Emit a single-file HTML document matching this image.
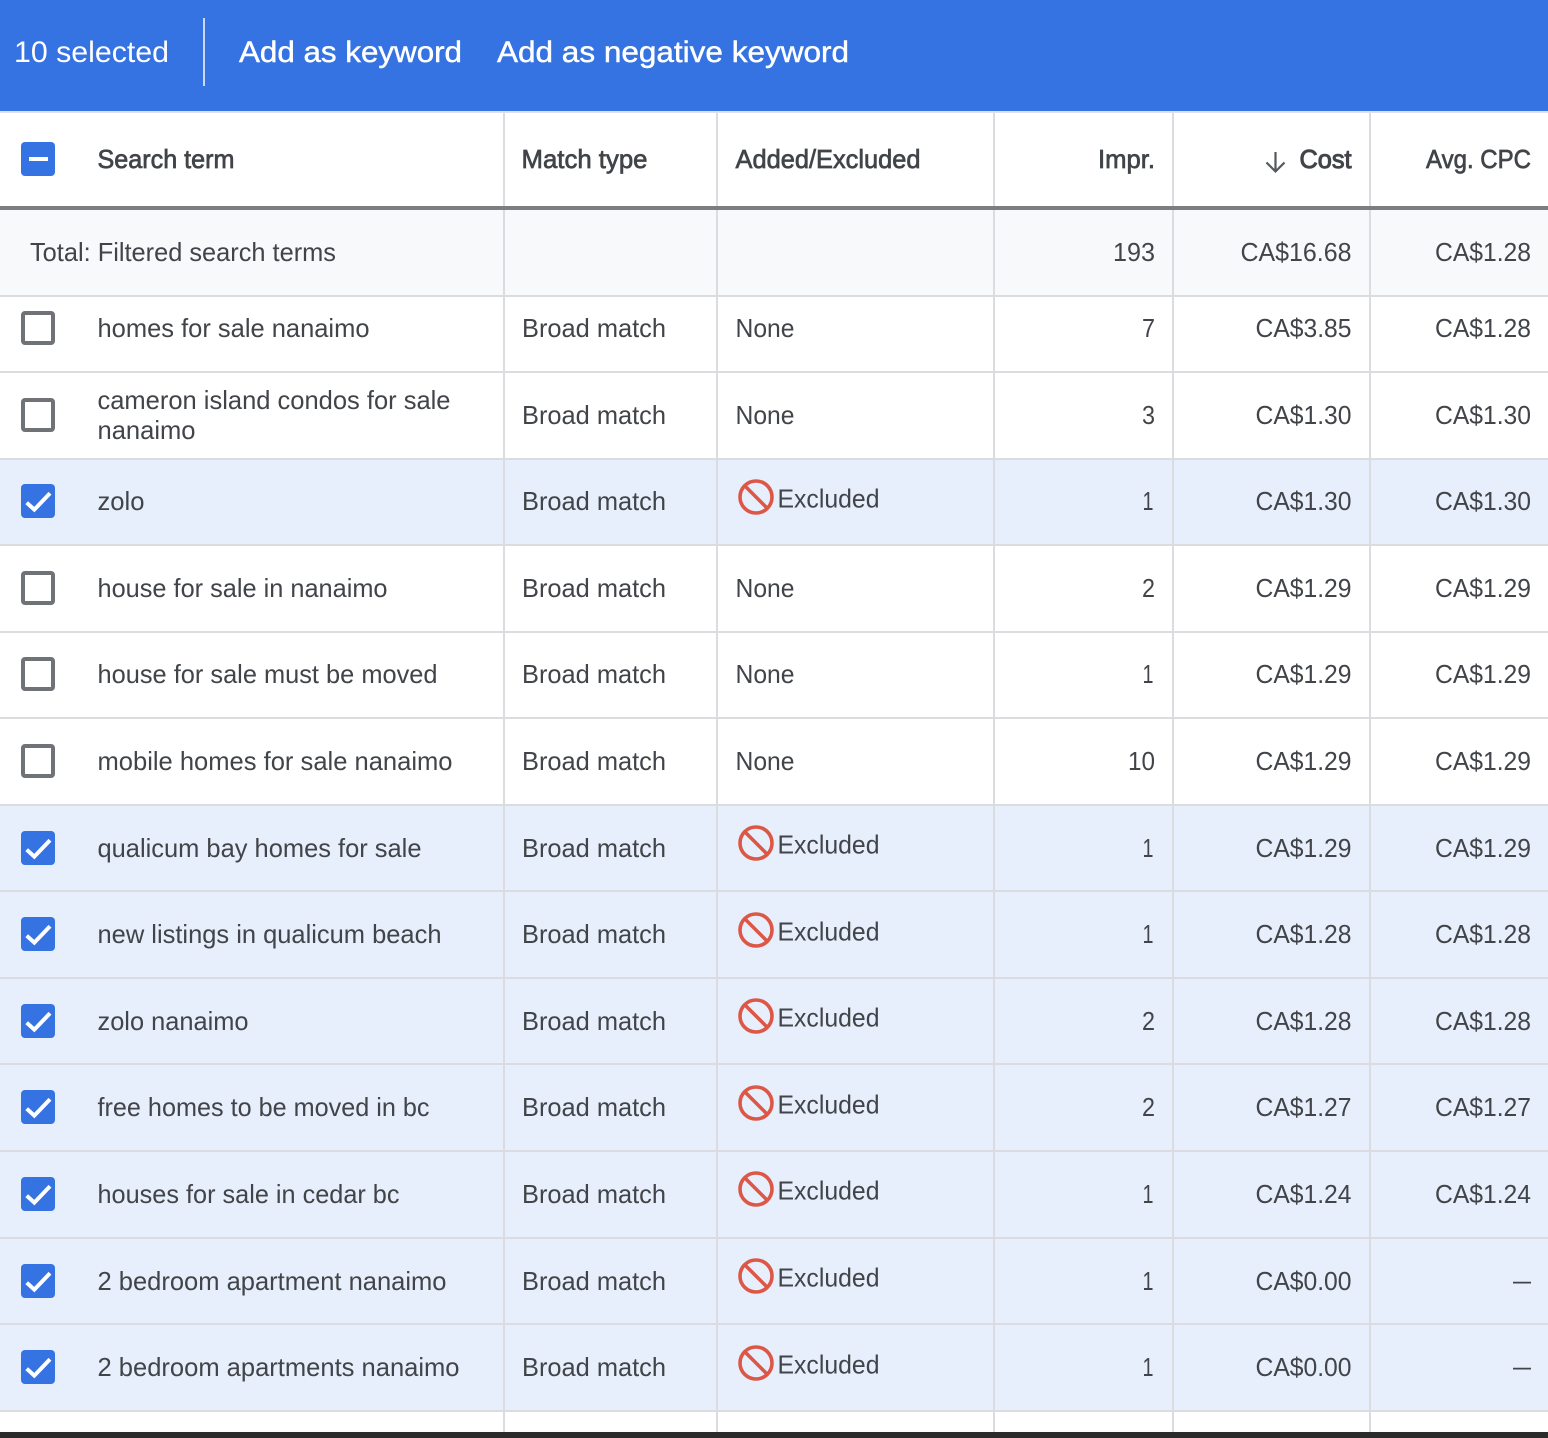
<!DOCTYPE html>
<html><head><meta charset="utf-8"><title>Search terms</title>
<style>
html,body{margin:0;padding:0;background:#fff;width:1548px;height:1438px;overflow:hidden}
svg{display:block}
text{font-family:"Liberation Sans",sans-serif;font-size:26px;fill:#414448;transform:translateX(-.5px)}
.h{stroke:#414448;stroke-width:.7px}
.b{font-size:30px;fill:#fff;transform:none}
.m{stroke:#fff;stroke-width:.45px}
.t{transform:none}
.l{fill:#dadce0}
</style></head><body>
<svg xmlns="http://www.w3.org/2000/svg" width="1548" height="1438" viewBox="0 0 1548 1438">
<defs>
<g id="e"><rect x="-17" y="-17" width="34" height="34" rx="3" fill="#fff" stroke="none"/><rect x="-15" y="-15" width="30" height="30" rx="2" fill="#fff" stroke="#6f7377" stroke-width="4"/></g>
<g id="c"><rect x="-17" y="-17" width="34" height="34" rx="4" fill="#3573e2"/><path d="M-11.3 1.7L-3.7 8.6L12-7.7" fill="none" stroke="#fff" stroke-width="4"/></g>
<g id="x"><circle cx="0" cy="0" r="16" fill="none" stroke="#dc5746" stroke-width="3.6"/><path d="M-11-11L11 11" stroke="#dc5746" stroke-width="3.6"/></g>
</defs>
<rect width="1548" height="1438" fill="#fff"/>
<rect width="1548" height="111" fill="#3573e2"/>
<rect y="111" width="1548" height="2" fill="#dfe1e5"/>
<rect x="203" y="18" width="2" height="68" fill="#c9d9f6"/>
<text class="b" x="14" y="62" textLength="155" lengthAdjust="spacingAndGlyphs">10 selected</text>
<text class="b m" x="239" y="62" textLength="223" lengthAdjust="spacingAndGlyphs">Add as keyword</text>
<text class="b m" x="497" y="62" textLength="352" lengthAdjust="spacingAndGlyphs">Add as negative keyword</text>

<!-- backgrounds -->
<rect y="210" width="1548" height="86" fill="#f8f9fb"/>
<rect y="459" width="1548" height="86" fill="#e8effc"/>
<rect y="805" width="1548" height="606" fill="#e8effc"/>

<!-- vertical lines -->
<rect class="l" x="503" y="113" width="2" height="1319"/>
<rect class="l" x="716" y="113" width="2" height="1319"/>
<rect class="l" x="993" y="113" width="2" height="1319"/>
<rect class="l" x="1172" y="113" width="2" height="1319"/>
<rect class="l" x="1369" y="113" width="2" height="1319"/>

<!-- horizontal lines -->
<rect y="206" width="1548" height="4" fill="#7a7e81"/>
<rect class="l" y="295" width="1548" height="2"/>
<rect class="l" y="371" width="1548" height="2"/>
<rect class="l" y="458" width="1548" height="2"/>
<rect class="l" y="544" width="1548" height="2"/>
<rect class="l" y="631" width="1548" height="2"/>
<rect class="l" y="717" width="1548" height="2"/>
<rect class="l" y="804" width="1548" height="2"/>
<rect class="l" y="890" width="1548" height="2"/>
<rect class="l" y="977" width="1548" height="2"/>
<rect class="l" y="1063" width="1548" height="2"/>
<rect class="l" y="1150" width="1548" height="2"/>
<rect class="l" y="1237" width="1548" height="2"/>
<rect class="l" y="1323" width="1548" height="2"/>
<rect class="l" y="1410" width="1548" height="2"/>
<rect y="1432" width="1548" height="6" fill="#2b2b2b"/>

<!-- header -->
<rect x="21" y="142" width="34" height="34" rx="4" fill="#3573e2"/>
<rect x="29" y="157" width="19" height="4" fill="#fff"/>
<text class="h" x="98" y="168" textLength="137" lengthAdjust="spacingAndGlyphs">Search term</text>
<text class="h" x="522" y="168" textLength="126" lengthAdjust="spacingAndGlyphs">Match type</text>
<text class="h" x="736" y="168" textLength="185" lengthAdjust="spacingAndGlyphs">Added/Excluded</text>
<text class="h t" x="1098" y="168" textLength="57" lengthAdjust="spacingAndGlyphs">Impr.</text>
<path d="M1275.5 152V171M1266.5 162.500L1275.500 171.500L1284.500 162.500" fill="none" stroke="#55585c" stroke-width="2.200"/>
<text class="h" x="1300" y="168" textLength="52" lengthAdjust="spacingAndGlyphs" style="stroke-width:1px">Cost</text>
<text class="h t" x="1426" y="168" textLength="105" lengthAdjust="spacingAndGlyphs">Avg. CPC</text>

<!-- total -->
<text class="t" x="30" y="261" textLength="306" lengthAdjust="spacingAndGlyphs">Total: Filtered search terms</text>
<text class="t" x="1113" y="261" textLength="42" lengthAdjust="spacingAndGlyphs">193</text>
<text x="1241" y="261" textLength="111" lengthAdjust="spacingAndGlyphs">CA$16.68</text>
<text class="t" x="1435" y="261" textLength="96" lengthAdjust="spacingAndGlyphs">CA$1.28</text>

<!-- row 1 -->
<use href="#e" x="38" y="328"/>
<text x="98" y="337" textLength="272" lengthAdjust="spacingAndGlyphs">homes for sale nanaimo</text>
<text class="t" x="522" y="337" textLength="144" lengthAdjust="spacingAndGlyphs">Broad match</text>
<text x="736" y="337" textLength="59" lengthAdjust="spacingAndGlyphs">None</text>
<text class="t" x="1142" y="337" textLength="13" lengthAdjust="spacingAndGlyphs">7</text>
<text x="1256" y="337" textLength="96" lengthAdjust="spacingAndGlyphs">CA$3.85</text>
<text class="t" x="1435" y="337" textLength="96" lengthAdjust="spacingAndGlyphs">CA$1.28</text>

<!-- row 2 -->
<use href="#e" x="38" y="415"/>
<text x="98" y="409" textLength="353" lengthAdjust="spacingAndGlyphs">cameron island condos for sale</text>
<text x="98" y="439" textLength="98" lengthAdjust="spacingAndGlyphs">nanaimo</text>
<text class="t" x="522" y="424" textLength="144" lengthAdjust="spacingAndGlyphs">Broad match</text>
<text x="736" y="424" textLength="59" lengthAdjust="spacingAndGlyphs">None</text>
<text class="t" x="1142" y="424" textLength="13" lengthAdjust="spacingAndGlyphs">3</text>
<text x="1256" y="424" textLength="96" lengthAdjust="spacingAndGlyphs">CA$1.30</text>
<text class="t" x="1435" y="424" textLength="96" lengthAdjust="spacingAndGlyphs">CA$1.30</text>

<!-- row 3 -->
<use href="#c" x="38" y="501"/>
<text x="98" y="510" textLength="47" lengthAdjust="spacingAndGlyphs">zolo</text>
<text class="t" x="522" y="510" textLength="144" lengthAdjust="spacingAndGlyphs">Broad match</text>
<use href="#x" x="756" y="497"/>
<text x="778" y="507.500" textLength="102" lengthAdjust="spacingAndGlyphs">Excluded</text>
<text x="1143" y="510" textLength="11" lengthAdjust="spacingAndGlyphs">1</text>
<text x="1256" y="510" textLength="96" lengthAdjust="spacingAndGlyphs">CA$1.30</text>
<text class="t" x="1435" y="510" textLength="96" lengthAdjust="spacingAndGlyphs">CA$1.30</text>

<!-- row 4 -->
<use href="#e" x="38" y="588"/>
<text x="98" y="597" textLength="290" lengthAdjust="spacingAndGlyphs">house for sale in nanaimo</text>
<text class="t" x="522" y="597" textLength="144" lengthAdjust="spacingAndGlyphs">Broad match</text>
<text x="736" y="597" textLength="59" lengthAdjust="spacingAndGlyphs">None</text>
<text class="t" x="1142" y="597" textLength="13" lengthAdjust="spacingAndGlyphs">2</text>
<text x="1256" y="597" textLength="96" lengthAdjust="spacingAndGlyphs">CA$1.29</text>
<text class="t" x="1435" y="597" textLength="96" lengthAdjust="spacingAndGlyphs">CA$1.29</text>

<!-- row 5 -->
<use href="#e" x="38" y="674"/>
<text x="98" y="683" textLength="340" lengthAdjust="spacingAndGlyphs">house for sale must be moved</text>
<text class="t" x="522" y="683" textLength="144" lengthAdjust="spacingAndGlyphs">Broad match</text>
<text x="736" y="683" textLength="59" lengthAdjust="spacingAndGlyphs">None</text>
<text x="1143" y="683" textLength="11" lengthAdjust="spacingAndGlyphs">1</text>
<text x="1256" y="683" textLength="96" lengthAdjust="spacingAndGlyphs">CA$1.29</text>
<text class="t" x="1435" y="683" textLength="96" lengthAdjust="spacingAndGlyphs">CA$1.29</text>

<!-- row 6 -->
<use href="#e" x="38" y="761"/>
<text x="98" y="770" textLength="355" lengthAdjust="spacingAndGlyphs">mobile homes for sale nanaimo</text>
<text class="t" x="522" y="770" textLength="144" lengthAdjust="spacingAndGlyphs">Broad match</text>
<text x="736" y="770" textLength="59" lengthAdjust="spacingAndGlyphs">None</text>
<text class="t" x="1128" y="770" textLength="27" lengthAdjust="spacingAndGlyphs">10</text>
<text x="1256" y="770" textLength="96" lengthAdjust="spacingAndGlyphs">CA$1.29</text>
<text class="t" x="1435" y="770" textLength="96" lengthAdjust="spacingAndGlyphs">CA$1.29</text>

<!-- row 7 -->
<use href="#c" x="38" y="848"/>
<text x="98" y="857" textLength="324" lengthAdjust="spacingAndGlyphs">qualicum bay homes for sale</text>
<text class="t" x="522" y="857" textLength="144" lengthAdjust="spacingAndGlyphs">Broad match</text>
<use href="#x" x="756" y="843"/>
<text x="778" y="853.500" textLength="102" lengthAdjust="spacingAndGlyphs">Excluded</text>
<text x="1143" y="857" textLength="11" lengthAdjust="spacingAndGlyphs">1</text>
<text x="1256" y="857" textLength="96" lengthAdjust="spacingAndGlyphs">CA$1.29</text>
<text class="t" x="1435" y="857" textLength="96" lengthAdjust="spacingAndGlyphs">CA$1.29</text>

<!-- row 8 -->
<use href="#c" x="38" y="934"/>
<text x="98" y="943" textLength="344" lengthAdjust="spacingAndGlyphs">new listings in qualicum beach</text>
<text class="t" x="522" y="943" textLength="144" lengthAdjust="spacingAndGlyphs">Broad match</text>
<use href="#x" x="756" y="930"/>
<text x="778" y="940.500" textLength="102" lengthAdjust="spacingAndGlyphs">Excluded</text>
<text x="1143" y="943" textLength="11" lengthAdjust="spacingAndGlyphs">1</text>
<text x="1256" y="943" textLength="96" lengthAdjust="spacingAndGlyphs">CA$1.28</text>
<text class="t" x="1435" y="943" textLength="96" lengthAdjust="spacingAndGlyphs">CA$1.28</text>

<!-- row 9 -->
<use href="#c" x="38" y="1021"/>
<text x="98" y="1030" textLength="151" lengthAdjust="spacingAndGlyphs">zolo nanaimo</text>
<text class="t" x="522" y="1030" textLength="144" lengthAdjust="spacingAndGlyphs">Broad match</text>
<use href="#x" x="756" y="1016"/>
<text x="778" y="1026.500" textLength="102" lengthAdjust="spacingAndGlyphs">Excluded</text>
<text class="t" x="1142" y="1030" textLength="13" lengthAdjust="spacingAndGlyphs">2</text>
<text x="1256" y="1030" textLength="96" lengthAdjust="spacingAndGlyphs">CA$1.28</text>
<text class="t" x="1435" y="1030" textLength="96" lengthAdjust="spacingAndGlyphs">CA$1.28</text>

<!-- row 10 -->
<use href="#c" x="38" y="1107"/>
<text x="98" y="1116" textLength="332" lengthAdjust="spacingAndGlyphs">free homes to be moved in bc</text>
<text class="t" x="522" y="1116" textLength="144" lengthAdjust="spacingAndGlyphs">Broad match</text>
<use href="#x" x="756" y="1103"/>
<text x="778" y="1113.500" textLength="102" lengthAdjust="spacingAndGlyphs">Excluded</text>
<text class="t" x="1142" y="1116" textLength="13" lengthAdjust="spacingAndGlyphs">2</text>
<text x="1256" y="1116" textLength="96" lengthAdjust="spacingAndGlyphs">CA$1.27</text>
<text class="t" x="1435" y="1116" textLength="96" lengthAdjust="spacingAndGlyphs">CA$1.27</text>

<!-- row 11 -->
<use href="#c" x="38" y="1194"/>
<text x="98" y="1203" textLength="302" lengthAdjust="spacingAndGlyphs">houses for sale in cedar bc</text>
<text class="t" x="522" y="1203" textLength="144" lengthAdjust="spacingAndGlyphs">Broad match</text>
<use href="#x" x="756" y="1189"/>
<text x="778" y="1199.500" textLength="102" lengthAdjust="spacingAndGlyphs">Excluded</text>
<text x="1143" y="1203" textLength="11" lengthAdjust="spacingAndGlyphs">1</text>
<text x="1256" y="1203" textLength="96" lengthAdjust="spacingAndGlyphs">CA$1.24</text>
<text class="t" x="1435" y="1203" textLength="96" lengthAdjust="spacingAndGlyphs">CA$1.24</text>

<!-- row 12 -->
<use href="#c" x="38" y="1281"/>
<text x="98" y="1290" textLength="349" lengthAdjust="spacingAndGlyphs">2 bedroom apartment nanaimo</text>
<text class="t" x="522" y="1290" textLength="144" lengthAdjust="spacingAndGlyphs">Broad match</text>
<use href="#x" x="756" y="1276"/>
<text x="778" y="1286.500" textLength="102" lengthAdjust="spacingAndGlyphs">Excluded</text>
<text x="1143" y="1290" textLength="11" lengthAdjust="spacingAndGlyphs">1</text>
<text x="1256" y="1290" textLength="96" lengthAdjust="spacingAndGlyphs">CA$0.00</text>
<text class="t" x="1513" y="1289" textLength="18" lengthAdjust="spacingAndGlyphs">—</text>

<!-- row 13 -->
<use href="#c" x="38" y="1367"/>
<text x="98" y="1376" textLength="362" lengthAdjust="spacingAndGlyphs">2 bedroom apartments nanaimo</text>
<text class="t" x="522" y="1376" textLength="144" lengthAdjust="spacingAndGlyphs">Broad match</text>
<use href="#x" x="756" y="1363"/>
<text x="778" y="1373.500" textLength="102" lengthAdjust="spacingAndGlyphs">Excluded</text>
<text x="1143" y="1376" textLength="11" lengthAdjust="spacingAndGlyphs">1</text>
<text x="1256" y="1376" textLength="96" lengthAdjust="spacingAndGlyphs">CA$0.00</text>
<text class="t" x="1513" y="1375" textLength="18" lengthAdjust="spacingAndGlyphs">—</text>
</svg>
</body></html>
